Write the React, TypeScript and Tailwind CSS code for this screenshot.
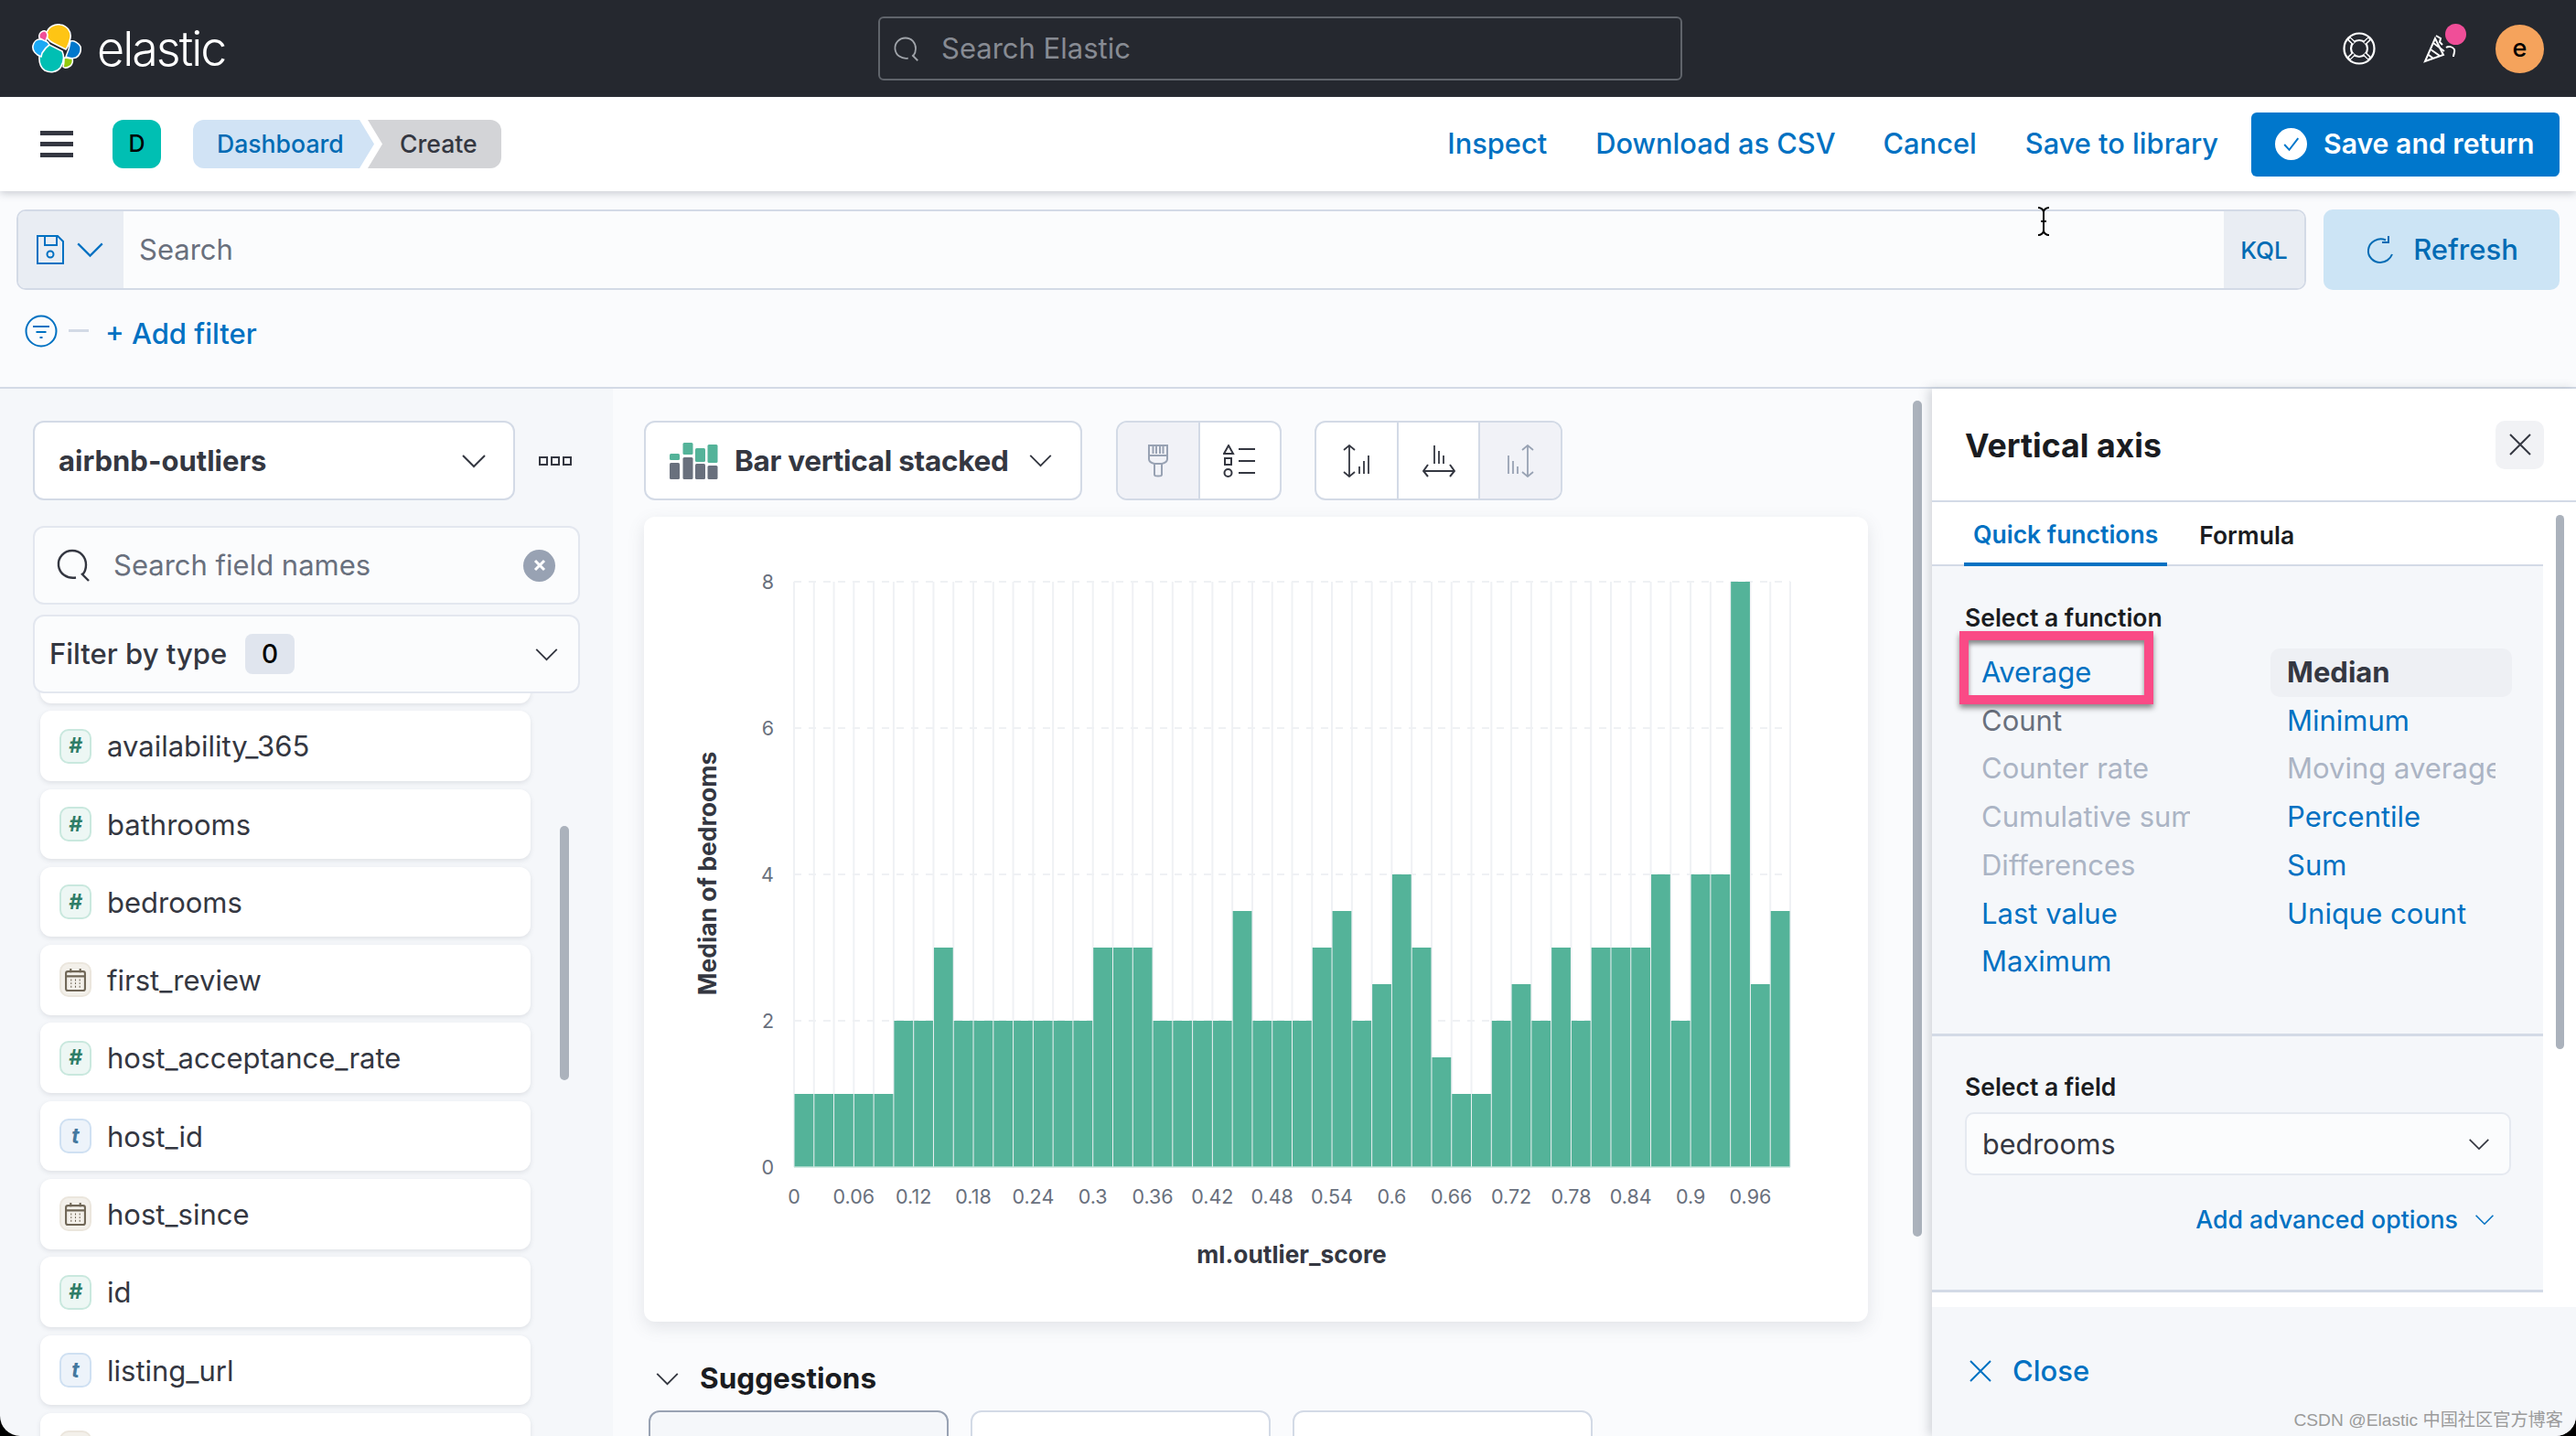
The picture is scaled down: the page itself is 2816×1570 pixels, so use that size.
import React from 'react'

// bar heights read off the histogram, one per 0.02 bucket
const BARS = [
  1, 1, 1, 1, 1, 2, 2, 3, 2, 2, 2, 2, 2, 2, 2, 3, 3, 3, 2, 2, 2, 2, 3.5, 2, 2, 2, 3, 3.5, 2, 2.5, 4, 3, 1.5, 1, 1, 2,
  2.5, 2, 3, 2, 3, 3, 3, 4, 2, 4, 4, 8, 2.5, 3.5,
]
const X_LABELS = ['0', '0.06', '0.12', '0.18', '0.24', '0.3', '0.36', '0.42', '0.48', '0.54', '0.6', '0.66', '0.72', '0.78', '0.84', '0.9', '0.96']

type FieldType = 'number' | 'date' | 'text'

const FIELDS: { name: string; type: FieldType }[] = [
  { name: 'availability_365', type: 'number' },
  { name: 'bathrooms', type: 'number' },
  { name: 'bedrooms', type: 'number' },
  { name: 'first_review', type: 'date' },
  { name: 'host_acceptance_rate', type: 'number' },
  { name: 'host_id', type: 'text' },
  { name: 'host_since', type: 'date' },
  { name: 'id', type: 'number' },
  { name: 'listing_url', type: 'text' },
]

const FUNCTIONS_LEFT = [
  { label: 'Average', cls: 'text-[#0071c2]' },
  { label: 'Count', cls: 'text-[#69707d]' },
  { label: 'Counter rate', cls: 'text-[#abb4c4]' },
  { label: 'Cumulative sum', cls: 'text-[#abb4c4]' },
  { label: 'Differences', cls: 'text-[#abb4c4]' },
  { label: 'Last value', cls: 'text-[#0071c2]' },
  { label: 'Maximum', cls: 'text-[#0071c2]' },
]

const FUNCTIONS_RIGHT = [
  { label: 'Median', cls: 'text-[#343741] font-bold bg-[#eef0f4] rounded-[10px]' },
  { label: 'Minimum', cls: 'text-[#0071c2]' },
  { label: 'Moving average', cls: 'text-[#abb4c4]' },
  { label: 'Percentile', cls: 'text-[#0071c2]' },
  { label: 'Sum', cls: 'text-[#0071c2]' },
  { label: 'Unique count', cls: 'text-[#0071c2]' },
]

function Chevron({ className }: { className: string }) {
  return (
    <svg viewBox="0 0 28 16" fill="none" stroke="currentColor" strokeWidth="2" className={className}>
      <path d="M2 2l12 12L26 2" />
    </svg>
  )
}

function SearchIcon({ className }: { className: string }) {
  return (
    <svg viewBox="0 0 36 36" fill="none" stroke="currentColor" strokeWidth="2.4" className={className}>
      <path d="M21 31.5C11 33 3 27 2 18.500C1 9.500 8 2 17 2s15 7 15 15.500c0 4-1 7.500-3.500 10.500" />
      <path d="M27 27l8 8" />
    </svg>
  )
}

function ElasticLogo() {
  return (
    <svg viewBox="0 0 54 54" className="w-[54px] h-[54px] shrink-0">
      <g stroke="#fff" strokeWidth="1.6">
        <path d="M16 10c2-7 9-10 15-9 7 1 12 7 11 14-1 5-2 9-5 13L23 21c-4-2-8-6-7-11z" fill="#fec514" />
        <path d="M9 29c2-5 6-7 10-6l14 7c2 5 2 12-2 18-4 5-11 6-17 3-6-4-7-13-5-22z" fill="#00bfb3" />
        <path d="M8 17c5-1 10 3 11 6-3 2-5 4-8 9l-1 4C4 34 0 29 1 24c1-4 4-7 7-7z" fill="#1ba9f5" />
        <path d="M12 8c3-1 5 2 5 5l-2 6c-3-1-5-3-7-3C7 12 9 9 12 8z" fill="#f04e98" />
        <path d="M42 19c4-1 9 2 11 6 1 5-1 10-5 12-3 1-7 1-11-1 2-4 4-10 5-17z" fill="#0077cc" />
        <path d="M35 37c3 0 6 1 9 1 1 3 0 6-2 8-3 2-6 3-8 1 1-3 1-7 1-10z" fill="#93c90e" />
      </g>
    </svg>
  )
}

function FieldToken({ type }: { type: FieldType }) {
  if (type === 'date') {
    return (
      <span className="w-[35px] h-[38px] rounded-[10px] border-2 border-[#ebe6dd] bg-[#f3f0ea] flex items-center justify-center shrink-0">
        <svg viewBox="0 0 22 24" className="w-[23px] h-[25px]" fill="none" stroke="#6f6656" strokeWidth="2">
          <rect x="1" y="3" width="20" height="20" rx="2" />
          <path d="M1 8h20M6 0v4M16 0v4" />
          <path d="M6 12h1M10.500 12h1M15 12h1M6 15.500h1M10.500 15.500h1M15 15.500h1M6 19h1M10.500 19h1M15 19h1" strokeWidth="1.800" />
        </svg>
      </span>
    )
  }
  const isNumber = type === 'number'
  return (
    <span
      className={`w-[35px] h-[38px] rounded-[10px] border-2 flex items-center justify-center shrink-0 text-[23px] font-bold italic ${
        isNumber ? 'border-[#c9e8de] bg-[#edf7f4] text-[#2f7d67]' : 'border-[#cfe0f2] bg-[#edf3fa] text-[#44789f]'
      }`}
    >
      {isNumber ? '#' : 't'}
    </span>
  )
}

function HeaderBar() {
  return (
    <header className="h-[106px] shrink-0 bg-[#25282f] flex items-center pl-[35px] pr-[35px]">
      <ElasticLogo />
      <span className="ml-[17px] w-[500px] text-[52px] leading-none font-light tracking-[-2px] text-white pt-[2px]">elastic</span>
      <div className="ml-[354px] w-[879px] h-[70px] rounded-[6px] border-2 border-[#60646b] flex items-center pl-[15px] text-[#878b93]">
        <SearchIcon className="w-[27px] h-[27px] text-[#a0a4aa]" />
        <span className="ml-[25px] text-[31px]">Search Elastic</span>
      </div>
      <svg viewBox="0 0 36 36" fill="none" stroke="#fff" strokeWidth="2.2" className="ml-[722px] w-[36px] h-[36px] shrink-0">
        <circle cx="18" cy="18" r="16.500" />
        <circle cx="18" cy="18" r="9" />
        <path d="M6.500 7l5.500 5M29.500 7L24 12M6.500 29l5.500-5M29.500 29L24 24" strokeWidth="5" stroke="#fff" />
        <path d="M7.500 7.500l4.500 4.500M28.500 7.500L24 12M7.500 28.500l4.500-4.500M28.500 28.500L24 24" strokeWidth="2" stroke="#25282f" />
      </svg>
      <div className="relative ml-[52px] w-[36px] h-[34px] shrink-0">
        <svg viewBox="0 0 36 34" fill="none" stroke="#fff" strokeWidth="2" className="w-[36px] h-[34px]">
          <path d="M13 6L2 31l20-7z" />
          <path d="M8 18l10 7M11 11l12 9M6 24l5 4" />
          <path d="M14 3l5 3-1 4 3 3M25 16c3-2 7-1 9 2 1 3-1 5-1 8" />
        </svg>
        <span className="absolute -top-[10px] left-[24px] w-[23px] h-[23px] rounded-full bg-[#f04e98]" />
      </div>
      <span className="ml-[43px] w-[53px] h-[53px] rounded-full bg-[#f5a35c] flex items-center justify-center text-[27px] font-medium text-black shrink-0">
        e
      </span>
    </header>
  )
}

function NavBar() {
  return (
    <nav className="relative z-20 h-[103px] shrink-0 bg-white flex items-center pl-[44px] pr-[18px] shadow-[0_3px_8px_rgba(105,112,125,0.3)]">
      <div className="w-[36px] flex flex-col gap-[7px]">
        <span className="h-[5px] bg-[#343741]" />
        <span className="h-[5px] bg-[#343741]" />
        <span className="h-[5px] bg-[#343741]" />
      </div>
      <span className="ml-[43px] w-[53px] h-[53px] rounded-[12px] bg-[#00bfb3] flex items-center justify-center text-[25px] font-medium text-black">D</span>
      <div className="ml-[35px] flex h-[53px] text-[26.600px] font-medium">
        <span className="w-[198px] pl-[26px] flex items-center bg-[#d1e3f5] text-[#006bb4] rounded-l-[12px] [clip-path:polygon(0_0,182px_0,198px_50%,182px_100%,0_100%)]">
          Dashboard
        </span>
        <span className="ml-[-7px] w-[146px] pl-[35px] flex items-center bg-[#d3d4d7] text-[#343741] rounded-r-[12px] [clip-path:polygon(0_0,100%_0,100%_100%,0_100%,16px_50%)]">
          Create
        </span>
      </div>
      <div className="ml-auto flex items-center text-[30.800px] font-medium text-[#0071c2]">
        <span>Inspect</span>
        <span className="ml-[53px]">Download as CSV</span>
        <span className="ml-[52px]">Cancel</span>
        <span className="ml-[53px]">Save to library</span>
        <button className="ml-[36px] w-[337px] h-[70px] rounded-[6px] bg-[#0077cc] text-white flex items-center pl-[26px]">
          <svg viewBox="0 0 36 36" className="w-[35px] h-[35px]">
            <circle cx="18" cy="18" r="18" fill="#fff" />
            <path d="M10.500 18.500l5.500 6L26 11.500" fill="none" stroke="#0077cc" strokeWidth="2" />
          </svg>
          <span className="ml-[18px] font-semibold text-[30.200px]">Save and return</span>
        </button>
      </div>
    </nav>
  )
}

function QueryBar() {
  return (
    <section className="relative h-[216px] shrink-0 bg-[#fafbfd] border-b-[2px] border-[#d3dae6] pl-[18px] pr-[18px] pt-[20px]">
      <div className="flex gap-[19px]">
        <div className="flex-1 h-[88px] rounded-[10px] border-2 border-[#d3dae6] flex overflow-hidden bg-[#fbfcfd]">
          <div className="w-[115px] bg-[#e9edf3] flex items-center pl-[19px] text-[#0071c2]">
            <svg viewBox="0 0 32 32" fill="none" stroke="currentColor" strokeWidth="2" className="w-[32px] h-[32px]">
              <path d="M2 1h22l6 6v24H2z" />
              <path d="M10 1v10h13V1" />
              <circle cx="16" cy="21" r="3.500" />
            </svg>
            <Chevron className="ml-[12px] w-[31px] h-[18px]" />
          </div>
          <span className="flex-1 pl-[17px] flex items-center text-[31px] text-[#69707d]">Search</span>
          <div className="w-[88px] bg-[#e9edf3] flex items-center justify-center text-[26px] font-medium text-[#006bb4]">KQL</div>
        </div>
        <div className="w-[258px] h-[88px] rounded-[10px] bg-[#cce4f5] flex items-center justify-center gap-[21px] pl-[2px] text-[31px] font-medium text-[#006bb4]">
          <svg viewBox="0 0 30 30" fill="none" stroke="currentColor" strokeWidth="2" className="w-[30px] h-[30px]">
            <path d="M21 4.500C13 1 3 6 2 15c-1 8 6 14 13 14 6 0 11-4 13-9" />
            <path d="M24 0v7h-7" />
          </svg>
          <span>Refresh</span>
        </div>
      </div>
      <div className="mt-[25px] flex items-center pl-[9px]">
        <svg viewBox="0 0 36 36" fill="none" stroke="#0071c2" strokeWidth="2" className="w-[36px] h-[36px] -mt-[6px]">
          <circle cx="18" cy="18" r="16.500" />
          <path d="M9 13h18M12.500 19h11M16.500 25h3" />
        </svg>
        <span className="ml-[12px] -mt-[8px] w-[22px] h-[3px] bg-[#d3dae6]" />
        <span className="ml-[18px] text-[31px] font-medium text-[#0071c2]">+ Add filter</span>
      </div>
    </section>
  )
}

function FieldList() {
  return (
    <aside className="relative w-[670px] shrink-0 bg-[#f5f7fa] pl-[36px] pt-[35px] overflow-hidden">
      <div className="flex items-center">
        <div className="w-[527px] h-[87px] rounded-[12px] border-2 border-[#d3dae6] bg-white flex items-center pl-[26px] pr-[29px] text-[31px] font-bold text-[#343741]">
          <span className="pt-[2px]">airbnb-outliers</span>
          <Chevron className="ml-auto w-[28px] h-[16px]" />
        </div>
        <svg viewBox="0 0 36 10" fill="none" stroke="#343741" strokeWidth="2" className="ml-[26px] w-[36px] h-[10px]">
          <rect x="1" y="1" width="8" height="8" />
          <rect x="14" y="1" width="8" height="8" />
          <rect x="27" y="1" width="8" height="8" />
        </svg>
      </div>
      <div className="mt-[28px] w-[598px] h-[86px] rounded-[12px] border-2 border-[#e3e7ef] bg-[#fbfcfd] flex items-center pl-[24px] pr-[25px]">
        <SearchIcon className="w-[36px] h-[36px] text-[#343741]" />
        <span className="ml-[26px] text-[31px] text-[#69707d]">Search field names</span>
        <span className="ml-auto w-[35px] h-[35px] rounded-full bg-[#98a2b3] flex items-center justify-center">
          <svg viewBox="0 0 14 14" fill="none" stroke="#fff" strokeWidth="3" className="w-[14px] h-[14px]">
            <path d="M2 2l10 10M12 2L2 12" />
          </svg>
        </span>
      </div>
      <div className="relative z-10 mt-[11px] w-[598px] h-[86px] rounded-[12px] border-2 border-[#e3e7ef] bg-[#fbfcfd] flex items-center pl-[16px] pr-[21px] text-[31px] font-medium text-[#343741]">
        Filter by type
        <span className="ml-[20px] w-[54px] h-[44px] rounded-[8px] bg-[#e0e5ee] flex items-center justify-center text-[28px] font-medium text-black">0</span>
        <Chevron className="ml-auto w-[27px] h-[15px]" />
      </div>
      <div className="mt-[-66px] ml-[8px] w-[536px] flex flex-col gap-[8.800px]">
        <div className="h-[76.500px] shrink-0 rounded-[12px] bg-white shadow-[0_2px_5px_rgba(105,112,125,0.16)]" />
        {FIELDS.map((field) => (
          <div
            key={field.name}
            className="h-[76.500px] shrink-0 rounded-[12px] bg-white shadow-[0_2px_5px_rgba(105,112,125,0.16)] flex items-center pl-[21px] text-[31px] text-[#343741]"
          >
            <FieldToken type={field.type} />
            <span className="ml-[17px] pt-[2px]">{field.name}</span>
          </div>
        ))}
        <div className="h-[76.500px] shrink-0 rounded-[12px] bg-white shadow-[0_2px_5px_rgba(105,112,125,0.16)] flex items-center pl-[21px]">
          <FieldToken type="date" />
        </div>
      </div>
      <div className="absolute left-[612px] top-[478px] w-[10px] h-[278px] rounded-[5px] bg-[#abb2bc]" />
    </aside>
  )
}

function Histogram() {
  const x0 = 164
  const yBase = 711
  const step = 21.78
  const unit = 80
  const verticals = Array.from({ length: 51 }, (_, i) => x0 + i * step)
  return (
    <svg viewBox="0 0 1338 880" className="block w-[1338px] h-[880px]">
      {verticals.map((x) => (
        <line key={x} x1={x} x2={x} y1={yBase - 8 * unit} y2={yBase} stroke="#eff1f4" strokeWidth="2" />
      ))}
      {[2, 4, 6, 8].map((v) => (
        <line key={v} x1={x0} x2={x0 + 50 * step} y1={yBase - v * unit} y2={yBase - v * unit} stroke="#eff1f4" strokeWidth="2" strokeDasharray="8 8" />
      ))}
      {BARS.map((v, i) => (
        <rect key={i} x={x0 + i * step + 0.5} y={yBase - v * unit} width={step - 1} height={v * unit} fill="#54b399" />
      ))}
      <line x1={x0} x2={x0 + 50 * step} y1={yBase} y2={yBase} stroke="#c6e6dc" strokeWidth="1.500" />
      {[0, 2, 4, 6, 8].map((v) => (
        <text key={v} x="142" y={yBase - v * unit + 8} textAnchor="end" fontSize="21.500" fill="#69707d">
          {v}
        </text>
      ))}
      {X_LABELS.map((label, i) => (
        <text key={label} x={x0 + i * 3 * step} y="751" textAnchor="middle" fontSize="21.500" fill="#69707d">
          {label}
        </text>
      ))}
      <text x="708" y="816" textAnchor="middle" fontSize="26.300" fontWeight="700" fill="#343741">
        ml.outlier_score
      </text>
      <text transform="translate(79 390) rotate(-90)" textAnchor="middle" fontSize="26.500" fontWeight="700" fill="#343741">
        Median of bedrooms
      </text>
    </svg>
  )
}

function Workspace() {
  return (
    <main className="relative w-[1442px] shrink-0 bg-[#fafbfd] pl-[34px] pt-[35px] overflow-hidden">
      <div className="flex">
        <div className="w-[479px] h-[87px] rounded-[12px] border-2 border-[#d3dae6] bg-white flex items-center pl-[26px] text-[#343741]">
          <svg viewBox="0 0 53 40" className="w-[53px] h-[40px] shrink-0">
            <rect x="0" y="12" width="11" height="7" rx="1.500" fill="#54b399" />
            <rect x="0" y="22" width="11" height="18" rx="1.500" fill="#69707d" />
            <rect x="14.500" y="0" width="11" height="13" rx="1.500" fill="#54b399" />
            <rect x="14.500" y="16" width="11" height="24" rx="1.500" fill="#69707d" />
            <rect x="28" y="6" width="11" height="15" rx="1.500" fill="#54b399" />
            <rect x="28" y="23" width="11" height="17" rx="1.500" fill="#69707d" />
            <rect x="41.500" y="2" width="11" height="20" rx="1.500" fill="#54b399" />
            <rect x="41.500" y="25" width="11" height="15" rx="1.500" fill="#69707d" />
          </svg>
          <span className="ml-[18px] text-[31.500px] font-bold tracking-[-0.3px]">Bar vertical stacked</span>
          <Chevron className="ml-[22px] w-[27px] h-[15px]" />
        </div>
        <div className="ml-[37px] w-[181px] h-[87px] rounded-[12px] border-2 border-[#d3dae6] bg-white flex overflow-hidden">
          <div className="flex-1 bg-[#f1f2f7] border-r-2 border-[#d3dae6] flex items-center justify-center">
            <svg viewBox="0 0 24 36" fill="none" stroke="#98a2b3" strokeWidth="2" className="w-[24px] h-[36px]">
              <path d="M2 1h20v15c0 2-2 4-6 5H8c-4-1-6-3-6-5z" />
              <path d="M6.500 1v9M10 1v9M14 1v9M17.500 1v9M2 12h20" />
              <path d="M8 21v12c0 2 8 2 8 0V21" />
            </svg>
          </div>
          <div className="flex-1 flex items-center justify-center">
            <svg viewBox="0 0 36 36" fill="none" stroke="#343741" strokeWidth="2" className="w-[36px] h-[36px]">
              <path d="M6 1l5 9H1z" />
              <rect x="2" y="15" width="7" height="7" />
              <circle cx="5.500" cy="31" r="4" />
              <path d="M17 5h18M17 18h18M17 31h18" />
            </svg>
          </div>
        </div>
        <div className="ml-[36px] w-[271px] h-[87px] rounded-[12px] border-2 border-[#d3dae6] bg-white flex overflow-hidden">
          <div className="flex-1 border-r-2 border-[#d3dae6] flex items-center justify-center">
            <svg viewBox="0 0 30 36" fill="none" stroke="#343741" strokeWidth="1.800" className="w-[30px] h-[36px]">
              <path d="M1 6l6-5 6 5M1 30l6 5 6-5M7 1v34" />
              <path d="M18 32v-8M23 32V18M28 32V12" />
            </svg>
          </div>
          <div className="flex-1 border-r-2 border-[#d3dae6] flex items-center justify-center">
            <svg viewBox="0 0 36 36" fill="none" stroke="#343741" strokeWidth="1.800" className="w-[36px] h-[36px]">
              <path d="M13 1v20M18 7v14M23 12v9" />
              <path d="M6 22l-5 7 5 6M30 22l5 7-5 6M1 29h34" strokeWidth="2" />
            </svg>
          </div>
          <div className="flex-1 bg-[#f1f2f7] flex items-center justify-center">
            <svg viewBox="0 0 30 36" fill="none" stroke="#98a2b3" strokeWidth="1.800" className="w-[30px] h-[36px]">
              <path d="M17 6l6-5 6 5M17 30l6 5 6-5M23 1v34" />
              <path d="M2 32V12M7 32V18M12 32v-8" />
            </svg>
          </div>
        </div>
      </div>
      <div className="mt-[18px] w-[1338px] h-[880px] rounded-[12px] bg-white shadow-[0_6px_18px_rgba(105,112,125,0.16)]">
        <Histogram />
      </div>
      <div className="mt-[45px] flex items-center pl-[12px] text-[#1a1c21]">
        <Chevron className="w-[27px] h-[15px] text-[#343741]" />
        <span className="ml-[22px] text-[31.500px] font-bold leading-[34px]">Suggestions</span>
      </div>
      <div className="mt-[18px] ml-[5px] flex gap-[24px]">
        <div className="w-[328px] h-[60px] rounded-t-[12px] border-2 border-[#98a2b3] bg-[#f5f7fa]" />
        <div className="w-[328px] h-[60px] rounded-t-[12px] border-2 border-[#d3dae6] bg-white" />
        <div className="w-[328px] h-[60px] rounded-t-[12px] border-2 border-[#d3dae6] bg-white" />
      </div>
      <div className="absolute right-[11px] top-[13px] w-[10px] h-[914px] rounded-[5px] bg-[#abb2bc]" />
    </main>
  )
}

function DimensionPanel() {
  return (
    <aside className="relative z-10 w-[704px] shrink-0 bg-white flex flex-col shadow-[-4px_0_10px_rgba(105,112,125,0.25)]">
      <div className="h-[124px] shrink-0 border-b-2 border-[#d3dae6] flex items-center pl-[36px] pr-[35px]">
        <span className="pt-[3px] text-[35.700px] font-bold text-[#1a1c21]">Vertical axis</span>
        <span className="ml-auto w-[53px] h-[53px] rounded-[10px] bg-[#f1f2f5] flex items-center justify-center">
          <svg viewBox="0 0 24 24" fill="none" stroke="#343741" strokeWidth="2" className="w-[24px] h-[24px]">
            <path d="M1 1l22 22M23 1L1 23" />
          </svg>
        </span>
      </div>
      <div className="w-[668px] flex-1 min-h-0">
        <div className="h-[70px] border-b-2 border-[#d3dae6] flex pl-[35px] text-[26.500px] font-semibold">
          <span className="h-[70px] px-[10px] pt-[5px] border-b-[4px] border-[#0071c2] flex items-center text-[#0071c2]">Quick functions</span>
          <span className="ml-[35px] pt-[5px] flex items-center text-[#1a1c21]">Formula</span>
        </div>
        <div className="h-[514px] bg-[#f5f7fa] border-b-[3px] border-[#d3dae6] pl-[36px] pt-[39px]">
          <div className="text-[26.500px] leading-[34px] font-semibold text-[#1a1c21]">Select a function</div>
          <div className="relative mt-[17px] flex text-[31px] leading-[52.700px]">
            <div className="w-[334px]">
              {FUNCTIONS_LEFT.map((fn) => (
                <div key={fn.label} className={`w-[246px] pl-[18px] overflow-hidden whitespace-nowrap ${fn.cls}`}>
                  {fn.label}
                </div>
              ))}
            </div>
            <div className="w-[264px]">
              {FUNCTIONS_RIGHT.map((fn) => (
                <div key={fn.label} className={`pl-[18px] overflow-hidden whitespace-nowrap ${fn.cls}`}>
                  <div className="w-[228px] overflow-hidden">{fn.label}</div>
                </div>
              ))}
            </div>
            <div className="absolute -left-[6px] -top-[19px] w-[212px] h-[80px] border-[10px] border-[#fa4a86] shadow-[0_4px_6px_rgba(0,0,0,0.45),inset_0_4px_5px_rgba(0,0,0,0.45)]" />
          </div>
        </div>
        <div className="h-[280px] bg-[#f5f7fa] border-b-[3px] border-[#d3dae6] pl-[36px] pr-[35px] pt-[38px]">
          <div className="text-[26.500px] leading-[34px] font-semibold text-[#1a1c21]">Select a field</div>
          <div className="mt-[11px] h-[69px] rounded-[10px] border-2 border-[#e5e9f0] bg-[#fbfcfd] flex items-center pl-[17px] pr-[21px] text-[30.500px] text-[#343741]">
            bedrooms
            <Chevron className="ml-auto w-[24px] h-[14px]" />
          </div>
          <div className="mt-[28px] flex items-center justify-end pr-[18px] text-[26.700px] font-medium text-[#0071c2]">
            Add advanced options
            <Chevron className="ml-[18px] w-[22px] h-[13px]" />
          </div>
        </div>
      </div>
      <div className="relative h-[141px] shrink-0 bg-[#f5f7fa] pl-[41px] pt-[47px]">
        <div className="flex items-center text-[31px] font-medium text-[#0071c2]">
          <svg viewBox="0 0 24 24" fill="none" stroke="currentColor" strokeWidth="2" className="w-[24px] h-[24px]">
            <path d="M1 1l22 22M23 1L1 23" />
          </svg>
          <span className="ml-[23px]">Close</span>
        </div>
        <span className="absolute right-[14px] bottom-[2px] text-[19.200px] text-[#9b9b9b] [font-family:'Liberation_Sans','Noto_Sans_CJK_SC',sans-serif]">
          CSDN @Elastic 中国社区官方博客
        </span>
      </div>
      <div className="absolute right-[13px] top-[138px] w-[9px] h-[584px] rounded-[5px] bg-[#abb2bc]" />
    </aside>
  )
}

export default function App() {
  return (
    <div className="relative w-[2816px] h-[1570px] bg-black overflow-hidden [font-family:Inter,sans-serif]">
      <div className="h-full flex flex-col overflow-hidden rounded-b-[22px]">
        <HeaderBar />
        <NavBar />
        <QueryBar />
        <div className="flex flex-1 min-h-0">
          <FieldList />
          <Workspace />
          <DimensionPanel />
        </div>
      </div>
      {/* mouse pointer left over the query bar */}
      <svg viewBox="0 0 14 32" fill="none" stroke="#000" strokeWidth="2" className="absolute left-[2227px] top-[226px] w-[14px] h-[32px]">
        <path d="M1 1c3 0 6 2 6 5v20c0 3-3 5-6 5M13 1c-3 0-6 2-6 5v20c0 3 3 5 6 5M4 16h6" />
      </svg>
    </div>
  )
}
